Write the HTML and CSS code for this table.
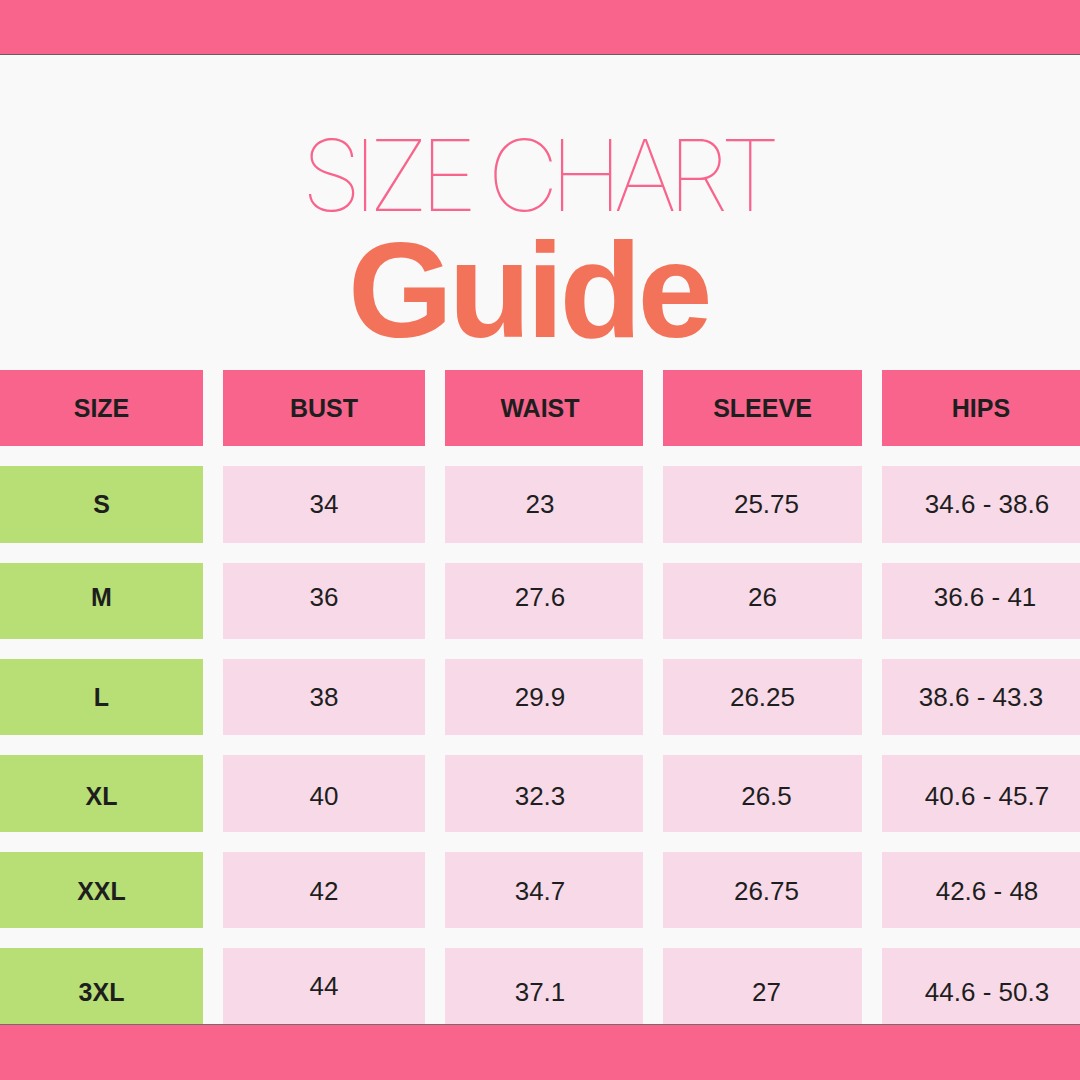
FILE: index.html
```html
<!DOCTYPE html>
<html>
<head>
<meta charset="utf-8">
<link rel="stylesheet" href="styles.css">
</head>
<body>
<div class="page">
  <div class="topbar"></div>
  <div class="titles">
    <div class="t1">SIZE CHART</div>
    <div class="t2">Guide</div>
  </div>
  <div class="chart">
    <div class="cell head">SIZE</div>
    <div class="cell head">BUST</div>
    <div class="cell head waist">WAIST</div>
    <div class="cell head">SLEEVE</div>
    <div class="cell head">HIPS</div>

    <div class="cell size">S</div>
    <div class="cell val">34</div>
    <div class="cell val waist">23</div>
    <div class="cell val r4">25.75</div>
    <div class="cell val r6">34.6 - 38.6</div>

    <div class="cell size rowm">M</div>
    <div class="cell val rowm">36</div>
    <div class="cell val waist rowm">27.6</div>
    <div class="cell val rowm">26</div>
    <div class="cell val r5 rowm">36.6 - 41</div>

    <div class="cell size">L</div>
    <div class="cell val">38</div>
    <div class="cell val waist">29.9</div>
    <div class="cell val">26.25</div>
    <div class="cell val">38.6 - 43.3</div>

    <div class="cell size rowxl">XL</div>
    <div class="cell val rowxl">40</div>
    <div class="cell val waist rowxl">32.3</div>
    <div class="cell val r4 rowxl">26.5</div>
    <div class="cell val r6 rowxl">40.6 - 45.7</div>

    <div class="cell size rowxxl">XXL</div>
    <div class="cell val rowxxl">42</div>
    <div class="cell val waist rowxxl">34.7</div>
    <div class="cell val r4 rowxxl">26.75</div>
    <div class="cell val r6 rowxxl">42.6 - 48</div>

    <div class="cell size row3xl">3XL</div>
    <div class="cell val">44</div>
    <div class="cell val waist row3xl">37.1</div>
    <div class="cell val r4 row3xl">27</div>
    <div class="cell val r6 row3xl">44.6 - 50.3</div>
  </div>
  <div class="bottombar"></div>
</div>
</body>
</html>
```
FILE: styles.css
```css
* { box-sizing: border-box; }
html, body { margin: 0; padding: 0; }
body {
  background: #f9f9f9;
  font-family: "Liberation Sans", Arial, sans-serif;
  color: #1e1e1e;
}
.page {
  width: 1080px;
  height: 1080px;
  display: flex;
  flex-direction: column;
  overflow: hidden;
}
.topbar {
  height: 55px;
  background: #f8648c;
  border-bottom: 1px solid #6a5a60;
  flex: none;
}
.titles {
  height: 315px;
  display: flex;
  flex-direction: column;
  align-items: center;
  flex: none;
}
.t1 {
  font-family: Inter, "Liberation Sans", sans-serif;
  font-weight: 100;
  font-size: 99px;
  line-height: 96px;
  letter-spacing: -9px;
  color: #f8648c;
  margin-top: 71.5px;
  margin-right: 7px;
}
.t2 {
  font-family: "Liberation Sans", Arial, sans-serif;
  font-weight: 700;
  font-size: 135px;
  line-height: 1;
  letter-spacing: -4.5px;
  color: #f3735a;
  margin-top: 0;
  margin-right: 24px;
}
.chart {
  display: grid;
  grid-template-columns: 203px 202px 198px 199px 198px;
  grid-auto-rows: 76.33px;
  column-gap: 20px;
  row-gap: 20px;
  flex: none;
}
.cell {
  display: flex;
  align-items: center;
  justify-content: center;
  font-size: 26px;
}
.head {
  background: #f8648c;
  font-weight: 700;
  font-size: 25px;
}
.size {
  background: #b7df76;
  font-weight: 700;
  font-size: 25px;
}
.val {
  background: #f7d9e8;
}
.waist { padding-right: 8px; }
.r4 { padding-left: 8px; }
.r5 { padding-left: 8px; }
.r6 { padding-left: 12px; }
.rowm { padding-bottom: 6px; }
.rowxl { padding-top: 6px; }
.rowxxl { padding-top: 3px; }
.row3xl { padding-top: 12px; }
.bottombar {
  flex: 1;
  background: #f8648c;
  border-top: 1px solid #7a6a70;
}
```
